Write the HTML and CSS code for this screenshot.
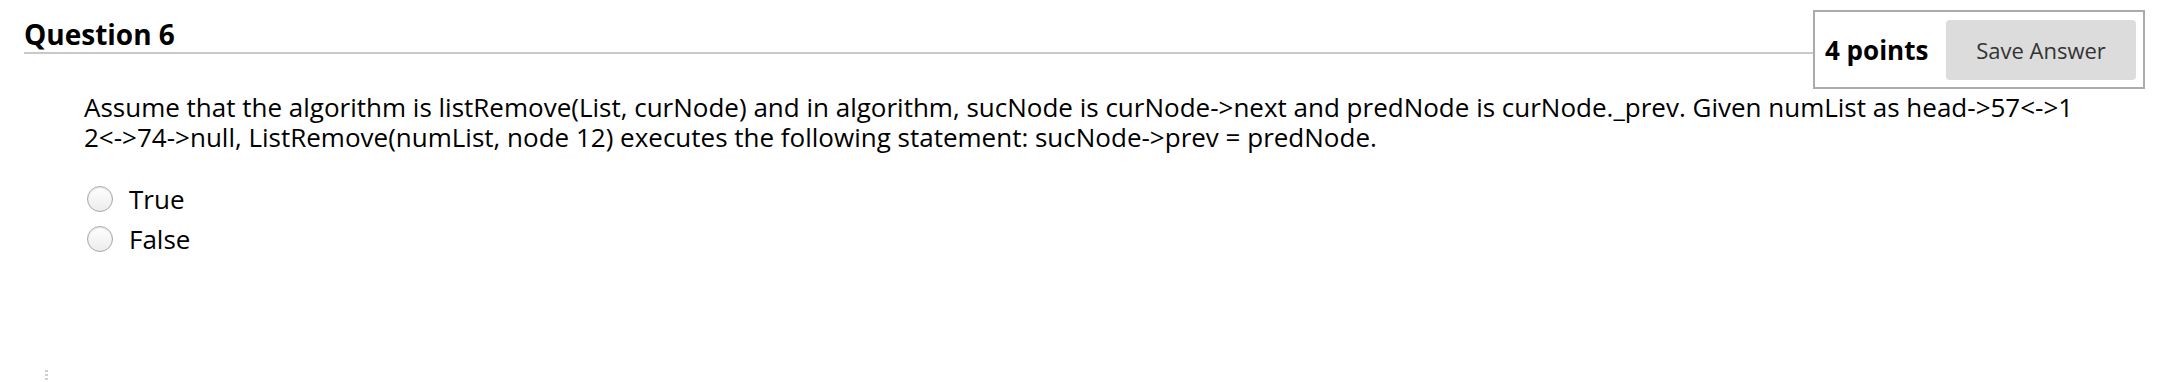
FILE: index.html
```html
<!DOCTYPE html>
<html>
<head>
<meta charset="utf-8">
<link rel="stylesheet" href="styles.css">
</head>
<body>
<div class="question">
  <div class="header">
    <h3 class="title">Question 6</h3>
    <div class="points-box">
      <span class="points">4 points</span>
      <button class="save">Save Answer</button>
    </div>
  </div>
  <div class="prompt">Assume that the algorithm is listRemove(List, curNode) and in algorithm, sucNode is curNode-&gt;next and predNode is curNode._prev. Given numList as head-&gt;57&lt;-&gt;1<br>2&lt;-&gt;74-&gt;null, ListRemove(numList, node 12) executes the following statement: sucNode-&gt;prev = predNode.</div>
  <ul class="options">
    <li class="option"><span class="radio"></span><span class="label">True</span></li>
    <li class="option"><span class="radio"></span><span class="label">False</span></li>
  </ul>
  <div class="handle"><span></span><span></span><span></span></div>
</div>
</body>
</html>
```

FILE: styles.css
```css
html, body {
  margin: 0;
  padding: 0;
  background: #fff;
}
body {
  font-family: "Open Sans", "Liberation Sans", sans-serif;
  color: #000;
}
.header {
  display: flex;
  align-items: flex-start;
  padding: 0 17px 0 24px;
}
.title {
  flex: 1;
  margin: 16px 0 0;
  font-size: 28px;
  font-weight: 700;
  line-height: 36px;
  border-bottom: 2px solid #c9c9c9;
}
.points-box {
  margin-top: 10px;
  width: 332px;
  height: 79px;
  box-sizing: border-box;
  border: 2px solid #ababab;
  padding: 8px 7px 7px 10px;
  display: flex;
  align-items: center;
  justify-content: space-between;
}
.points {
  font-size: 26px;
  font-weight: 700;
  color: #000;
}
.save {
  width: 190px;
  height: 60px;
  border: none;
  border-radius: 4px;
  background: #dcdcdc;
  color: #333;
  font-family: "Open Sans", "Liberation Sans", sans-serif;
  font-size: 22px;
  padding: 0;
}
.prompt {
  margin: 3px 0 0 84px;
  font-size: 26px;
  line-height: 30px;
  white-space: nowrap;
}
.options {
  list-style: none;
  margin: 27px 0 0 87px;
  padding: 0;
}
.option {
  display: flex;
  align-items: center;
  height: 40px;
  font-size: 26px;
}
.radio {
  width: 26px;
  height: 26px;
  box-sizing: border-box;
  border-radius: 50%;
  border: 1px solid #a8a8a8;
  background: linear-gradient(#ffffff, #ececec);
  box-shadow: inset 0 1px 2px rgba(0,0,0,0.1);
  margin-right: 16px;
}
.handle {
  margin: 111px 0 0 45px;
  display: flex;
  flex-direction: column;
  gap: 2px;
  width: 3px;
}
.handle span {
  width: 3px;
  height: 2px;
  background: #d0d0d0;
}
```
